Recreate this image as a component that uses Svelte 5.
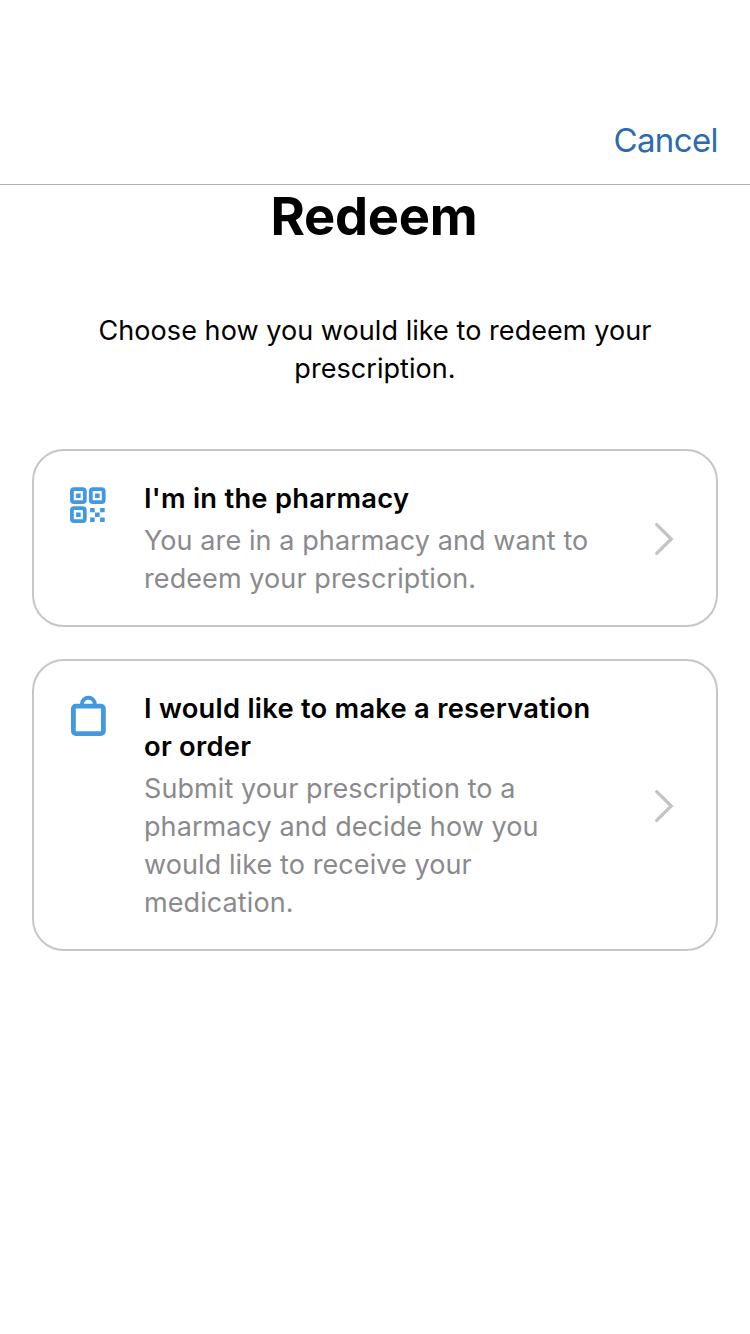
<script>
  const options = [
    { icon: 'qr', title: ["I'm in the pharmacy"], text: ['You are in a pharmacy and want to', 'redeem your prescription.'] },
    {
      icon: 'bag',
      title: ['I would like to make a reservation', 'or order'],
      text: ['Submit your prescription to a', 'pharmacy and decide how you', 'would like to receive your', 'medication.']
    }
  ];
</script>

<div class="screen">
  <header><button class="cancel">Cancel</button></header>
  <main>
    <h1>Redeem</h1>
    <p class="intro">Choose how you would like to redeem your<br />prescription.</p>
    <div class="options">
      {#each options as option}
        <button class="card">
          <span class="icon">
            {#if option.icon === 'qr'}
              <svg width="40" height="44" viewBox="0 0 40 44">
                <g fill="none" stroke="currentColor" stroke-width="3.8">
                  <rect x="3.9" y="4.2" width="12.9" height="12.9" rx="2.2" />
                  <rect x="22.8" y="4.2" width="12.9" height="12.9" rx="2.2" />
                  <rect x="3.9" y="23.2" width="12.9" height="12.9" rx="2.2" />
                </g>
                <path fill="currentColor" d="M8.1 8.4h4.6V13H8.1zM27 8.4h4.6V13H27zM8.1 27.4h4.6V32H8.1zM22.1 22.9h4.6v4.4h-4.6zM32.1 22.9h4.6v4.4h-4.6zM27 27.5h4.7v4.6H27zM22.1 32.4h4.6V37h-4.6zM32.1 32.4h4.6V37h-4.6z" />
              </svg>
            {:else}
              <svg width="40" height="44" viewBox="0 0 40 44">
                <g fill="none" stroke="currentColor">
                  <rect x="5.4" y="11.2" width="30" height="27.4" rx="2.4" stroke-width="4.8" />
                  <path stroke-width="3.9" d="M13.9 10.5V9.2a6.5 6.5 0 0 1 13 0v1.3" />
                </g>
              </svg>
            {/if}
          </span>
          <span class="copy">
            <strong>{#each option.title as line}<span class="line">{line}</span>{/each}</strong>
            <span class="text">{#each option.text as line}<span class="line">{line}</span>{/each}</span>
          </span>
          <svg class="chevron" width="22" height="36" viewBox="0 0 22 36">
            <path d="M3.7 3.6 18.3 18 3.7 32.4" fill="none" stroke="currentColor" stroke-width="3.3" stroke-linecap="round" stroke-linejoin="miter" />
          </svg>
        </button>
      {/each}
    </div>
  </main>
</div>

<style>
  :global(body) {
    margin: 0;
    background: #fff;
  }
  .screen {
    min-height: 1334px;
    box-sizing: border-box;
    font-family: Inter, 'Liberation Sans', sans-serif;
    color: #000;
  }
  button {
    font: inherit;
    background: none;
    border: 0;
    padding: 0;
    color: inherit;
  }
  header {
    height: 185px;
    box-sizing: border-box;
    border-bottom: 1px solid #b2b2b2;
    padding: 118px 32px 0;
    display: flex;
    justify-content: flex-end;
    align-items: flex-start;
  }
  .cancel {
    color: #2b6cb0;
    font-size: 33px;
    line-height: 45px;
    letter-spacing: -0.6px;
  }
  h1 {
    margin: 0;
    padding-right: 2px;
    text-align: center;
    font-size: 52.5px;
    line-height: 62px;
    font-weight: 700;
    letter-spacing: -0.3px;
  }
  .intro {
    margin: 65px 0 0;
    text-align: center;
    font-size: 27px;
    line-height: 38px;
    letter-spacing: 0.06px;
  }
  .options {
    display: flex;
    flex-direction: column;
    gap: 32px;
    padding: 61px 32px 0;
  }
  .card {
    display: flex;
    align-items: flex-start;
    box-sizing: border-box;
    border: 2px solid #c6c6c8;
    border-radius: 32px;
    padding: 29px 41px 27px 34px;
    text-align: left;
  }
  .icon {
    width: 76px;
    flex: none;
    color: #4299e1;
    padding-top: 5px;
  }
  .icon svg,
  .line {
    display: block;
  }
  .copy {
    flex: 1;
    font-size: 27px;
    line-height: 38px;
    letter-spacing: 0.09px;
    white-space: nowrap;
  }
  strong {
    display: block;
    font-weight: 600;
    font-size: 27.3px;
    letter-spacing: 0.26px;
  }
  .text {
    display: block;
    margin-top: 4px;
    color: #8a8a8e;
  }
  .chevron {
    align-self: center;
    flex: none;
    color: #c4c4c7;
  }
</style>
